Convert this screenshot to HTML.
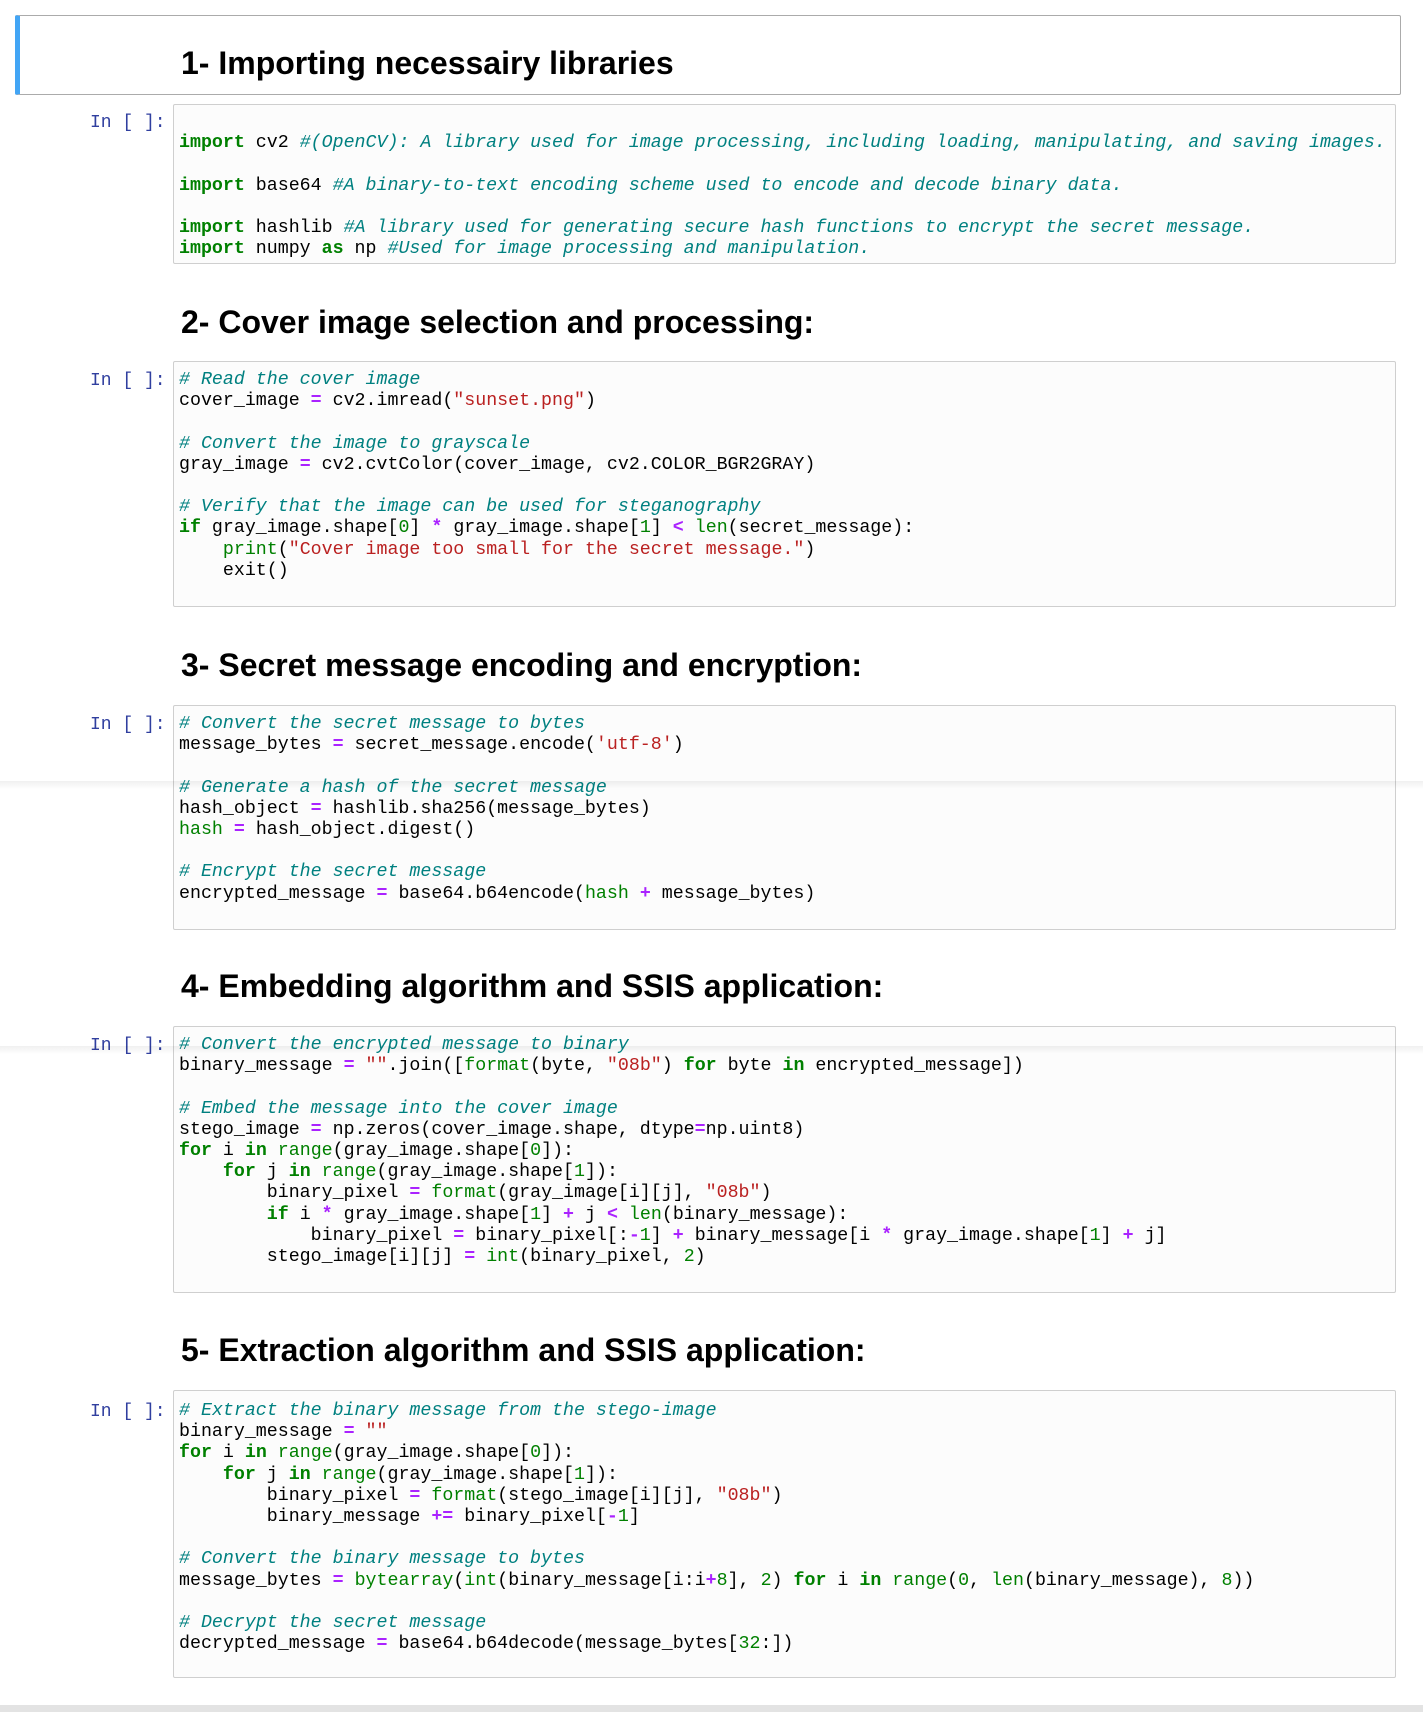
<!DOCTYPE html>
<html><head><meta charset="utf-8"><style>
body{margin:0;width:1423px;height:1712px;background:#fff;position:relative;overflow:hidden;font-family:"Liberation Sans",sans-serif}
.hc{position:absolute;left:15px;top:15px;width:1386px;height:80px;border:1px solid #ababab;border-left:5px solid #42a5f5;box-sizing:border-box;border-radius:2px}
h2{position:absolute;left:181px;margin:0;font-size:32px;line-height:36px;font-weight:bold;color:#000;white-space:nowrap}
.cell{position:absolute;left:173px;width:1223px;border:1px solid #cfcfcf;background:#fcfcfc;box-sizing:border-box;border-radius:2px}
pre{position:absolute;left:179px;margin:0;font-family:"Liberation Mono",monospace;font-size:18.3px;line-height:21.2px;color:#000;white-space:pre}
.p{position:absolute;left:90px;margin:0;font-family:"Liberation Mono",monospace;font-size:18px;line-height:21.2px;color:#303f9f;white-space:pre}
.k{color:#008000;font-weight:bold}.c{color:#008080;font-style:italic}.s{color:#ba2121}.o{color:#aa22ff;font-weight:bold}.n{color:#008000}.b{color:#008000}
.band{position:absolute;left:0;width:1423px;height:8px;background:linear-gradient(rgba(0,0,0,0.06),rgba(0,0,0,0))}
.foot{position:absolute;left:0;top:1705px;width:1423px;height:7px;background:#e3e3e3}
</style></head><body>
<div class="hc"></div>
<h2 style="top:45px">1- Importing necessairy libraries</h2>
<div class="cell" style="top:104px;height:160px"></div>
<div class="p" style="top:113px">In [ ]:</div>
<pre style="top:112px">&#8203;
<span class="k">import</span> cv2 <span class="c">#(OpenCV): A library used for image processing, including loading, manipulating, and saving images.</span>

<span class="k">import</span> base64 <span class="c">#A binary-to-text encoding scheme used to encode and decode binary data.</span>

<span class="k">import</span> hashlib <span class="c">#A library used for generating secure hash functions to encrypt the secret message.</span>
<span class="k">import</span> numpy <span class="k">as</span> np <span class="c">#Used for image processing and manipulation.</span></pre>

<h2 style="top:304px">2- Cover image selection and processing:</h2>
<div class="cell" style="top:361px;height:246px"></div>
<div class="p" style="top:371px">In [ ]:</div>
<pre style="top:370px"><span class="c"># Read the cover image</span>
cover_image <span class="o">=</span> cv2.imread(<span class="s">"sunset.png"</span>)

<span class="c"># Convert the image to grayscale</span>
gray_image <span class="o">=</span> cv2.cvtColor(cover_image, cv2.COLOR_BGR2GRAY)

<span class="c"># Verify that the image can be used for steganography</span>
<span class="k">if</span> gray_image.shape[<span class="n">0</span>] <span class="o">*</span> gray_image.shape[<span class="n">1</span>] <span class="o">&lt;</span> <span class="b">len</span>(secret_message):
    <span class="b">print</span>(<span class="s">"Cover image too small for the secret message."</span>)
    exit()</pre>

<h2 style="top:647px">3- Secret message encoding and encryption:</h2>
<div class="cell" style="top:705px;height:225px"></div>
<div class="p" style="top:715px">In [ ]:</div>
<pre style="top:714px"><span class="c"># Convert the secret message to bytes</span>
message_bytes <span class="o">=</span> secret_message.encode(<span class="s">'utf-8'</span>)

<span class="c"># Generate a hash of the secret message</span>
hash_object <span class="o">=</span> hashlib.sha256(message_bytes)
<span class="b">hash</span> <span class="o">=</span> hash_object.digest()

<span class="c"># Encrypt the secret message</span>
encrypted_message <span class="o">=</span> base64.b64encode(<span class="b">hash</span> <span class="o">+</span> message_bytes)</pre>
<div class="band" style="top:781px"></div>

<h2 style="top:968px">4- Embedding algorithm and SSIS application:</h2>
<div class="cell" style="top:1026px;height:267px"></div>
<div class="p" style="top:1036px">In [ ]:</div>
<pre style="top:1035px"><span class="c"># Convert the encrypted message to binary</span>
binary_message <span class="o">=</span> <span class="s">""</span>.join([<span class="b">format</span>(byte, <span class="s">"08b"</span>) <span class="k">for</span> byte <span class="k">in</span> encrypted_message])

<span class="c"># Embed the message into the cover image</span>
stego_image <span class="o">=</span> np.zeros(cover_image.shape, dtype<span class="o">=</span>np.uint8)
<span class="k">for</span> i <span class="k">in</span> <span class="b">range</span>(gray_image.shape[<span class="n">0</span>]):
    <span class="k">for</span> j <span class="k">in</span> <span class="b">range</span>(gray_image.shape[<span class="n">1</span>]):
        binary_pixel <span class="o">=</span> <span class="b">format</span>(gray_image[i][j], <span class="s">"08b"</span>)
        <span class="k">if</span> i <span class="o">*</span> gray_image.shape[<span class="n">1</span>] <span class="o">+</span> j <span class="o">&lt;</span> <span class="b">len</span>(binary_message):
            binary_pixel <span class="o">=</span> binary_pixel[:<span class="o">-</span><span class="n">1</span>] <span class="o">+</span> binary_message[i <span class="o">*</span> gray_image.shape[<span class="n">1</span>] <span class="o">+</span> j]
        stego_image[i][j] <span class="o">=</span> <span class="b">int</span>(binary_pixel, <span class="n">2</span>)</pre>
<div class="band" style="top:1046px"></div>

<h2 style="top:1332px">5- Extraction algorithm and SSIS application:</h2>
<div class="cell" style="top:1390px;height:288px"></div>
<div class="p" style="top:1402px">In [ ]:</div>
<pre style="top:1401px"><span class="c"># Extract the binary message from the stego-image</span>
binary_message <span class="o">=</span> <span class="s">""</span>
<span class="k">for</span> i <span class="k">in</span> <span class="b">range</span>(gray_image.shape[<span class="n">0</span>]):
    <span class="k">for</span> j <span class="k">in</span> <span class="b">range</span>(gray_image.shape[<span class="n">1</span>]):
        binary_pixel <span class="o">=</span> <span class="b">format</span>(stego_image[i][j], <span class="s">"08b"</span>)
        binary_message <span class="o">+=</span> binary_pixel[<span class="o">-</span><span class="n">1</span>]

<span class="c"># Convert the binary message to bytes</span>
message_bytes <span class="o">=</span> <span class="b">bytearray</span>(<span class="b">int</span>(binary_message[i:i<span class="o">+</span><span class="n">8</span>], <span class="n">2</span>) <span class="k">for</span> i <span class="k">in</span> <span class="b">range</span>(<span class="n">0</span>, <span class="b">len</span>(binary_message), <span class="n">8</span>))

<span class="c"># Decrypt the secret message</span>
decrypted_message <span class="o">=</span> base64.b64decode(message_bytes[<span class="n">32</span>:])</pre>
<div class="foot"></div>
</body></html>
